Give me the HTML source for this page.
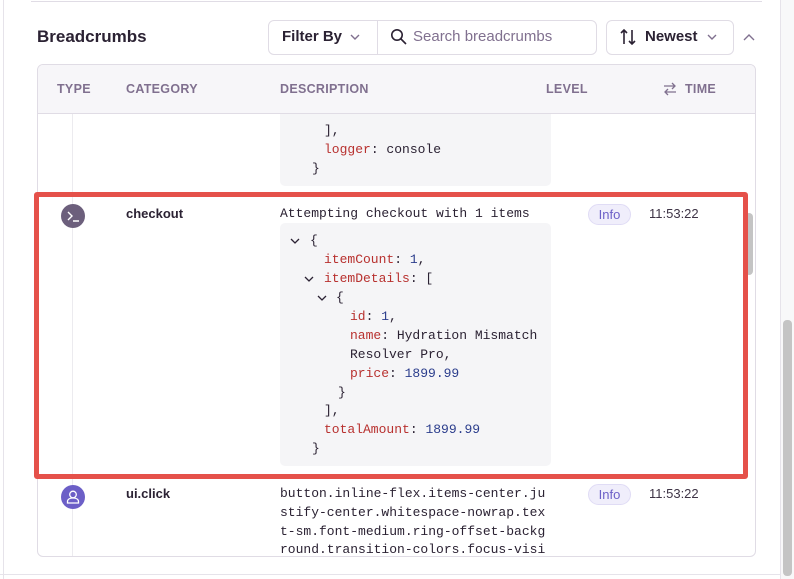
<!DOCTYPE html>
<html><head><style>
*{margin:0;padding:0;box-sizing:border-box}
body{width:794px;height:579px;background:#fff;position:relative;overflow:hidden;font-family:"Liberation Sans",sans-serif;color:#2b2233}
.abs{position:absolute}
.mono{font-family:"Liberation Mono",monospace;font-size:13px;color:#2b2233}
.k{color:#b8312f}.n{color:#2b3d8c}
.hdr{font-size:12.5px;font-weight:bold;color:#80708f;letter-spacing:.3px}
.ln{position:absolute;white-space:pre;line-height:19px}
</style></head><body>
<div class="abs" style="left:3px;top:0;width:1px;height:579px;background:#e6e3ea"></div>
<div class="abs" style="left:31px;top:1px;width:731px;height:1px;background:#e0dce5"></div>
<div class="abs" style="left:780px;top:0;width:14px;height:579px;background:#f8f8f9;border-left:1px solid #e6e3ea"></div>
<div class="abs" style="left:783px;top:320px;width:9px;height:256px;background:#c4c4c4;border-radius:4px"></div>
<div class="abs" style="left:0;top:574px;width:780px;height:1px;background:#e6e3ea"></div>

<div class="abs" style="left:37px;top:27px;font-size:17px;font-weight:bold;color:#2b2233">Breadcrumbs</div>
<div class="abs" style="left:268px;top:20px;width:329px;height:35px;border:1px solid #e0dce5;border-radius:6px"></div>
<div class="abs" style="left:377px;top:21px;width:1px;height:33px;background:#e0dce5"></div>
<div class="abs" style="left:282px;top:28px;font-size:15px;font-weight:bold;color:#2b2233">Filter By</div>
<svg class="abs" style="left:349px;top:33px" width="12" height="8"><path d="M2 2l4 4 4-4" stroke="#80708f" stroke-width="1.4" fill="none"/></svg>
<svg class="abs" style="left:390px;top:28px" width="18" height="18"><circle cx="7" cy="7" r="5.2" stroke="#2b2233" stroke-width="1.6" fill="none"/><path d="M11 11l5 5" stroke="#2b2233" stroke-width="1.6"/></svg>
<div class="abs" style="left:413px;top:28px;font-size:15px;color:#80708f">Search breadcrumbs</div>
<div class="abs" style="left:606px;top:20px;width:128px;height:35px;border:1px solid #e0dce5;border-radius:6px"></div>
<svg class="abs" style="left:619px;top:28px" width="18" height="18"><path d="M5 16V2M2 5l3-3 3 3M13 2v14M10 13l3 3 3-3" stroke="#2b2233" stroke-width="1.6" fill="none"/></svg>
<div class="abs" style="left:645px;top:28px;font-size:15px;font-weight:bold;color:#2b2233">Newest</div>
<svg class="abs" style="left:706px;top:33px" width="12" height="8"><path d="M2 2l4 4 4-4" stroke="#80708f" stroke-width="1.4" fill="none"/></svg>
<svg class="abs" style="left:742px;top:33px" width="14" height="9"><path d="M2 7l5-5 5 5" stroke="#80708f" stroke-width="1.4" fill="none"/></svg>

<div class="abs" style="left:37px;top:64px;width:719px;height:493px;border:1px solid #e0dce5;border-radius:6px;overflow:hidden">
 <div class="abs" style="left:34px;top:49px;width:1px;height:444px;background:#ecebef"></div>
</div>
<div class="abs" style="left:745px;top:213px;width:8px;height:62px;background:#c4c4c4;border-radius:4px"></div>

<div class="abs" style="left:280px;top:100px;width:271px;height:86px;background:#f5f5f7;border-radius:0 0 5px 5px"></div>
<div class="mono">
<div class="ln" style="left:310px;top:96px;color:#999">[Fast Refresh] rebuilding</div>
<div class="ln" style="left:324px;top:121px">],</div>
<div class="ln" style="left:324px;top:140px"><span class="k">logger</span>: console</div>
<div class="ln" style="left:312px;top:159px">}</div>
</div>
<div class="abs" style="left:38px;top:65px;width:717px;height:49px;background:#f7f6f9;border-bottom:1px solid #e0dce5;border-radius:5px 5px 0 0"></div>
<div class="abs hdr" style="left:57px;top:82px">TYPE</div>
<div class="abs hdr" style="left:126px;top:82px">CATEGORY</div>
<div class="abs hdr" style="left:280px;top:82px">DESCRIPTION</div>
<div class="abs hdr" style="left:546px;top:82px">LEVEL</div>
<svg class="abs" style="left:662px;top:82px" width="16" height="14"><path d="M2 4h11M10 1l3 3-3 3M14 10H3M6 7l-3 3 3 3" stroke="#80708f" stroke-width="1.3" fill="none"/></svg>
<div class="abs hdr" style="left:685px;top:82px">TIME</div>

<div class="abs" style="left:34px;top:192px;width:714px;height:287px;border:5px solid #e5514a;border-radius:3px"></div>
<div class="abs" style="left:61px;top:204px;width:24px;height:24px;border-radius:50%;background:#6c5f7c"></div>
<svg class="abs" style="left:61px;top:204px" width="24" height="24"><path d="M7 8l4 4-4 4M12 17h6" stroke="#fff" stroke-width="1.4" fill="none"/></svg>
<div class="abs" style="left:126px;top:206px;font-size:13px;font-weight:bold">checkout</div>
<div class="abs" style="left:588px;top:204px;width:43px;height:21px;border-radius:11px;background:#f0eefb;border:1px solid #e0dcf5;color:#6c5fc7;font-size:13px;text-align:center;line-height:19px">Info</div>
<div class="abs" style="left:649px;top:206px;font-size:13px;color:#3e3446">11:53:22</div>
<div class="mono">
<div class="ln" style="left:280px;top:204px">Attempting checkout with 1 items</div>
</div>
<div class="abs" style="left:280px;top:223px;width:271px;height:243px;background:#f5f5f7;border-radius:5px"></div>
<svg class="abs" style="left:290px;top:237px" width="10" height="8"><path d="M1 2l4 4 4-4" stroke="#2b2233" stroke-width="1.3" fill="none"/></svg>
<svg class="abs" style="left:304px;top:275px" width="10" height="8"><path d="M1 2l4 4 4-4" stroke="#2b2233" stroke-width="1.3" fill="none"/></svg>
<svg class="abs" style="left:317px;top:294px" width="10" height="8"><path d="M1 2l4 4 4-4" stroke="#2b2233" stroke-width="1.3" fill="none"/></svg>
<div class="mono">
<div class="ln" style="left:310px;top:231px">{</div>
<div class="ln" style="left:324px;top:250px"><span class="k">itemCount</span>: <span class="n">1</span>,</div>
<div class="ln" style="left:324px;top:269px"><span class="k">itemDetails</span>: [</div>
<div class="ln" style="left:336px;top:288px">{</div>
<div class="ln" style="left:350px;top:307px"><span class="k">id</span>: <span class="n">1</span>,</div>
<div class="ln" style="left:350px;top:326px"><span class="k">name</span>: Hydration Mismatch</div>
<div class="ln" style="left:350px;top:345px">Resolver Pro,</div>
<div class="ln" style="left:350px;top:364px"><span class="k">price</span>: <span class="n">1899.99</span></div>
<div class="ln" style="left:338px;top:383px">}</div>
<div class="ln" style="left:324px;top:401px">],</div>
<div class="ln" style="left:324px;top:420px"><span class="k">totalAmount</span>: <span class="n">1899.99</span></div>
<div class="ln" style="left:312px;top:439px">}</div>
</div>

<div class="abs" style="left:61px;top:485px;width:24px;height:24px;border-radius:50%;background:#6c5fc7"></div>
<svg class="abs" style="left:61px;top:485px" width="24" height="24"><circle cx="12" cy="9.5" r="3.3" stroke="#fff" stroke-width="1.3" fill="none"/><path d="M6.5 18v-1.5c0-2 2-3.5 5.5-3.5s5.5 1.5 5.5 3.5V18z" stroke="#fff" stroke-width="1.3" fill="none"/></svg>
<div class="abs" style="left:126px;top:486px;font-size:13px;font-weight:bold">ui.click</div>
<div class="abs" style="left:588px;top:484px;width:43px;height:21px;border-radius:11px;background:#f0eefb;border:1px solid #e0dcf5;color:#6c5fc7;font-size:13px;text-align:center;line-height:19px">Info</div>
<div class="abs" style="left:649px;top:486px;font-size:13px;color:#3e3446">11:53:22</div>
<div class="mono">
<div class="ln" style="left:280px;top:484px">button.inline-flex.items-center.ju</div>
<div class="ln" style="left:280px;top:503px">stify-center.whitespace-nowrap.tex</div>
<div class="ln" style="left:280px;top:522px">t-sm.font-medium.ring-offset-backg</div>
<div class="ln" style="left:280px;top:540px;height:15px;overflow:hidden">round.transition-colors.focus-visi</div>
</div>
</body></html>
